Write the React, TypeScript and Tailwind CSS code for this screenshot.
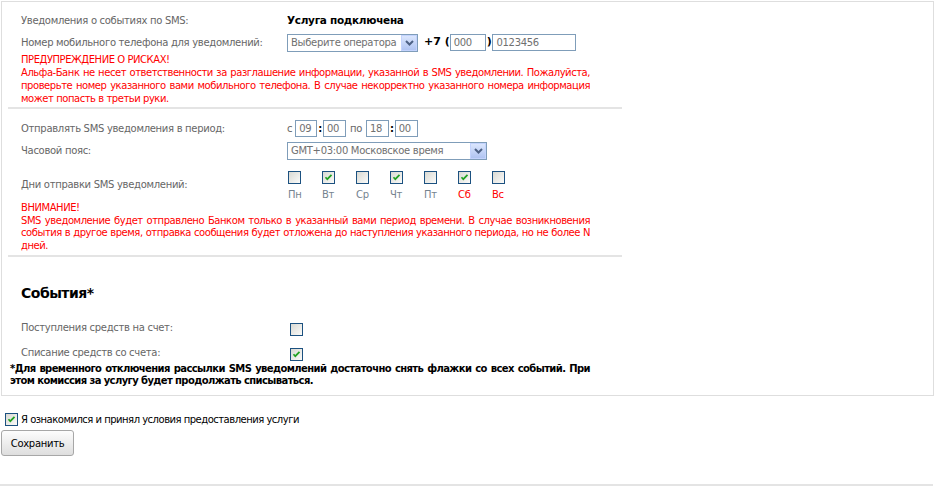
import React from "react";

const Cb = ({ checked }: { checked?: boolean }) => (
  <span className="relative inline-block w-[13px] h-[13px] border border-[#1c5180] bg-linear-to-br from-[#d9d9d3] to-[#fbfbf9] shrink-0">
    {checked && (
      <svg className="absolute left-0 top-0" width="11" height="11" viewBox="0 0 11 11">
        <path d="M2.5 5.2 L4.3 7.2 L8.5 2.8" stroke="#21a121" strokeWidth="1.7" fill="none" />
      </svg>
    )}
  </span>
);

const Select = ({ text, w }: { text: string; w: string }) => (
  <div className={`flex h-[18px] ${w} items-center border border-[#7f9db9] bg-white`}>
    <span className="flex-1 truncate pl-[3px] text-[#707070]">{text}</span>
    <span className="flex h-[16px] w-[16px] items-center justify-center border border-[#c3d3fd] bg-linear-to-b from-[#dbe6fd] to-[#b0c4f2]">
      <svg width="9" height="6" viewBox="0 0 9 6">
        <path d="M1 1 L4.5 4.5 L8 1" stroke="#4d6185" strokeWidth="2" fill="none" />
      </svg>
    </span>
  </div>
);

const Input = ({ text, w }: { text: string; w: string }) => (
  <span className={`flex h-[17px] ${w} items-center border border-[#7f9db9] bg-white pl-[3px] text-[#707070]`}>{text}</span>
);

const JLines = ({ head, lines, className }: { head?: string; lines: string[]; className?: string }) => (
  <div className={className}>
    {head && <div className="whitespace-nowrap">{head}</div>}
    {lines.map((l, i) => (
      <div
        key={i}
        className={
          i < lines.length - 1
            ? "whitespace-nowrap text-justify [text-align-last:justify]"
            : "whitespace-nowrap"
        }
      >
        {l}
      </div>
    ))}
  </div>
);

const Row = ({ label, children, className }: { label: string; children?: React.ReactNode; className?: string }) => (
  <div className={`flex h-[19px] items-center ${className ?? ""}`}>
    <div className="w-[279px] shrink-0 pl-[13px] text-[#666]">{label}</div>
    <div className="flex items-center">{children}</div>
  </div>
);

const days = [
  { d: "Пн", c: false, red: false },
  { d: "Вт", c: true, red: false },
  { d: "Ср", c: false, red: false },
  { d: "Чт", c: true, red: false },
  { d: "Пт", c: false, red: false },
  { d: "Сб", c: true, red: true },
  { d: "Вс", c: false, red: true },
];

export default function App() {
  return (
    <div className="relative h-[487px] w-[935px] overflow-hidden bg-white font-['DejaVu_Sans',sans-serif] text-[10px] tracking-[-0.3px] text-black">
      <div className="ml-[1px] mt-[1px] h-[395px] w-[933px] border border-[#dedede]">
        <div className="ml-[6px] w-[614px]">
          {/* Section 1 */}
          <div className="border-b-2 border-[#e4e4e4] pb-[2px] pt-[9px]">
            <Row label="Уведомления о событиях по SMS:">
              <span className="text-[10.5px] font-bold tracking-[-0.3px]">Услуга подключена</span>
            </Row>
            <Row label="Номер мобильного телефона для уведомлений:" className="mt-[3px]">
              <Select text="Выберите оператора" w="w-[131px]" />
              <span className="ml-[6px] text-[11px] font-bold tracking-[0px]">+7 (</span>
              <Input text="000" w="w-[36px]" />
              <span className="mx-[1px] text-[11px] font-bold">)</span>
              <Input text="0123456" w="w-[84px]" />
            </Row>
            <JLines
              className="mt-[1px] pl-[13px] pr-[32px] leading-[13px] tracking-[-0.45px] text-[#ff0000]"
              head="ПРЕДУПРЕЖДЕНИЕ О РИСКАХ!"
              lines={[
                "Альфа-Банк не несет ответственности за разглашение информации, указанной в SMS уведомлении. Пожалуйста,",
                "проверьте номер указанного вами мобильного телефона. В случае некорректно указанного номера информация",
                "может попасть в третьи руки.",
              ]}
            />
          </div>
          {/* Section 2 */}
          <div className="border-b-2 border-[#e4e4e4] pb-[2px] pt-[10px]">
            <Row label="Отправлять SMS уведомления в период:">
              <span className="mr-[3px] text-[#666]">с</span>
              <Input text="09" w="w-[22px]" />
              <span className="mx-[1px] font-bold">:</span>
              <Input text="00" w="w-[23px]" />
              <span className="mx-[4px] text-[#666]">по</span>
              <Input text="18" w="w-[23px]" />
              <span className="mx-[1px] font-bold">:</span>
              <Input text="00" w="w-[23px]" />
            </Row>
            <Row label="Часовой пояс:" className="mt-[3px]">
              <Select text="GMT+03:00 Московское время" w="w-[200px]" />
            </Row>
            <div className="mt-[9px] flex h-[30px] items-center">
              <div className="w-[279px] shrink-0 pl-[13px] text-[#666]">Дни отправки SMS уведомлений:</div>
              <div className="flex h-[30px] pl-[1px]">
                {days.map((x) => (
                  <div key={x.d} className="flex w-[34px] flex-col pt-[2px]">
                    <Cb checked={x.c} />
                    <span className={`mt-[3px] ${x.red ? "text-[#ff0000]" : "text-[#75838f]"}`}>{x.d}</span>
                  </div>
                ))}
              </div>
            </div>
            <JLines
              className="mt-[3px] pl-[13px] pr-[32px] leading-[12.7px] tracking-[-0.45px] text-[#ff0000]"
              head="ВНИМАНИЕ!"
              lines={[
                "SMS уведомление будет отправлено Банком только в указанный вами период времени. В случае возникновения",
                "события в другое время, отправка сообщения будет отложена до наступления указанного периода, но не более N",
                "дней.",
              ]}
            />
          </div>
          {/* Section 3 */}
          <div className="pt-[26px]">
            <div className="h-[20px] pl-[13px] text-[14px] font-bold leading-[20px] tracking-[-0.5px]">События*</div>
            <div className="mt-[15px] flex h-[19px] items-center">
              <div className="w-[282px] shrink-0 pl-[13px] text-[#666]">Поступления средств на счет:</div>
              <span className="flex pt-[4px]">
                <Cb />
              </span>
            </div>
            <div className="mt-[6px] flex h-[19px] items-center">
              <div className="w-[282px] shrink-0 pl-[13px] text-[#666]">Списание средств со счета:</div>
              <span className="flex pt-[4px]">
                <Cb checked />
              </span>
            </div>
            <JLines
              className="mt-[1px] pl-[2px] pr-[32px] text-[10px] font-bold leading-[12px] tracking-[-0.6px]"
              lines={[
                "*Для временного отключения рассылки SMS уведомлений достаточно снять флажки со всех событий. При",
                "этом комиссия за услугу будет продолжать списываться.",
              ]}
            />
          </div>
        </div>
      </div>
      <div className="ml-[5px] mt-[14px] flex h-[18px] items-center">
        <Cb checked />
        <span className="ml-[3px] tracking-[-0.5px]">Я ознакомился и принял условия предоставления услуги</span>
      </div>
      <button className="ml-[1px] mt-[2px] flex h-[26px] w-[73px] items-center justify-center rounded-[3px] border border-[#a7a7a7] bg-linear-to-b from-[#fdfdfd] to-[#dedede] text-[10px] text-black">
        Сохранить
      </button>
      <div className="absolute left-0 top-[484px] h-[2px] w-[933px] bg-[#e4e4e4]" />
    </div>
  );
}
